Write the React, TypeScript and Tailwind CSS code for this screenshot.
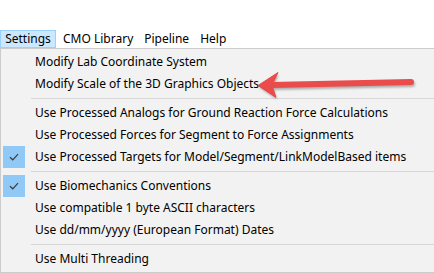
import React from 'react';

type Item = { label: string; checked?: boolean } | 'sep';

const items: Item[] = [
  { label: 'Modify Lab Coordinate System' },
  { label: 'Modify Scale of the 3D Graphics Objects' },
  'sep',
  { label: 'Use Processed Analogs for Ground Reaction Force Calculations' },
  { label: 'Use Processed Forces for Segment to Force Assignments' },
  { label: 'Use Processed Targets for Model/Segment/LinkModelBased items', checked: true },
  'sep',
  { label: 'Use Biomechanics Conventions', checked: true },
  { label: 'Use compatible 1 byte ASCII characters' },
  { label: 'Use dd/mm/yyyy (European Format) Dates' },
  'sep',
  { label: 'Use Multi Threading' },
];

function Check() {
  return (
    <svg width="10" height="8" viewBox="0 0 10 8" fill="none">
      <path d="M1 4.2 L3.8 6.8 L9 1.2" stroke="#3a3a3a" strokeWidth="1.2" />
    </svg>
  );
}

function Arrow() {
  return (
    <svg className="absolute left-[250px] top-[66px]" width="175" height="36" viewBox="250 66 175 36">
      <defs>
        <filter id="sh" x="-20%" y="-50%" width="140%" height="200%">
          <feGaussianBlur stdDeviation="1.2" />
        </filter>
      </defs>
      <g opacity="0.45" filter="url(#sh)" transform="translate(1 2)">
        <line x1="271" y1="85" x2="411" y2="82" stroke="#555" strokeWidth="6" strokeLinecap="round" />
        <path d="M258 85.5 L278 72.5 L272 85.2 L276 97.5 Z" fill="#555" />
      </g>
      <line x1="271" y1="85" x2="411" y2="82" stroke="#ea4b4b" strokeWidth="6" strokeLinecap="round" />
      <path d="M258 85.5 L278 72.5 L272 85.2 L276 97.5 Z" fill="#ea4b4b" stroke="#ea4b4b" strokeWidth="1" strokeLinejoin="round" />
    </svg>
  );
}

export default function App() {
  return (
    <div className="relative w-[434px] h-[273px] overflow-hidden bg-white text-[12px] text-black font-['Noto_Sans',sans-serif]">
      <div className="h-[29px]" />

      {/* menu bar */}
      <div className="flex h-[19px] items-center">
        <div className="flex h-[18px] w-[56px] items-center justify-center border border-[#99d1ff] bg-[#cce8ff]">Settings</div>
        <div className="ml-[7px]">CMO Library</div>
        <div className="ml-[11px]">Pipeline</div>
        <div className="ml-[11px]">Help</div>
      </div>

      {/* dropdown */}
      <div className="w-[440px] border border-[#cccccc] bg-[#f2f2f2] py-[2px]">
        {items.map((it, i) =>
          it === 'sep' ? (
            <div key={i} className="flex h-[7px] items-center pl-[30px]">
              <div className="h-px w-full bg-[#d7d7d7]" />
            </div>
          ) : (
            <div key={i} className="flex h-[22px] items-center">
              <div className="ml-[2px] flex h-[22px] w-[22px] items-center justify-center">
                {it.checked && (
                  <div className="flex h-[22px] w-[22px] items-center justify-center bg-[#90c8f6]">
                    <Check />
                  </div>
                )}
              </div>
              <span className="ml-[10px] whitespace-nowrap">{it.label}</span>
            </div>
          )
        )}
      </div>

      <Arrow />
    </div>
  );
}
